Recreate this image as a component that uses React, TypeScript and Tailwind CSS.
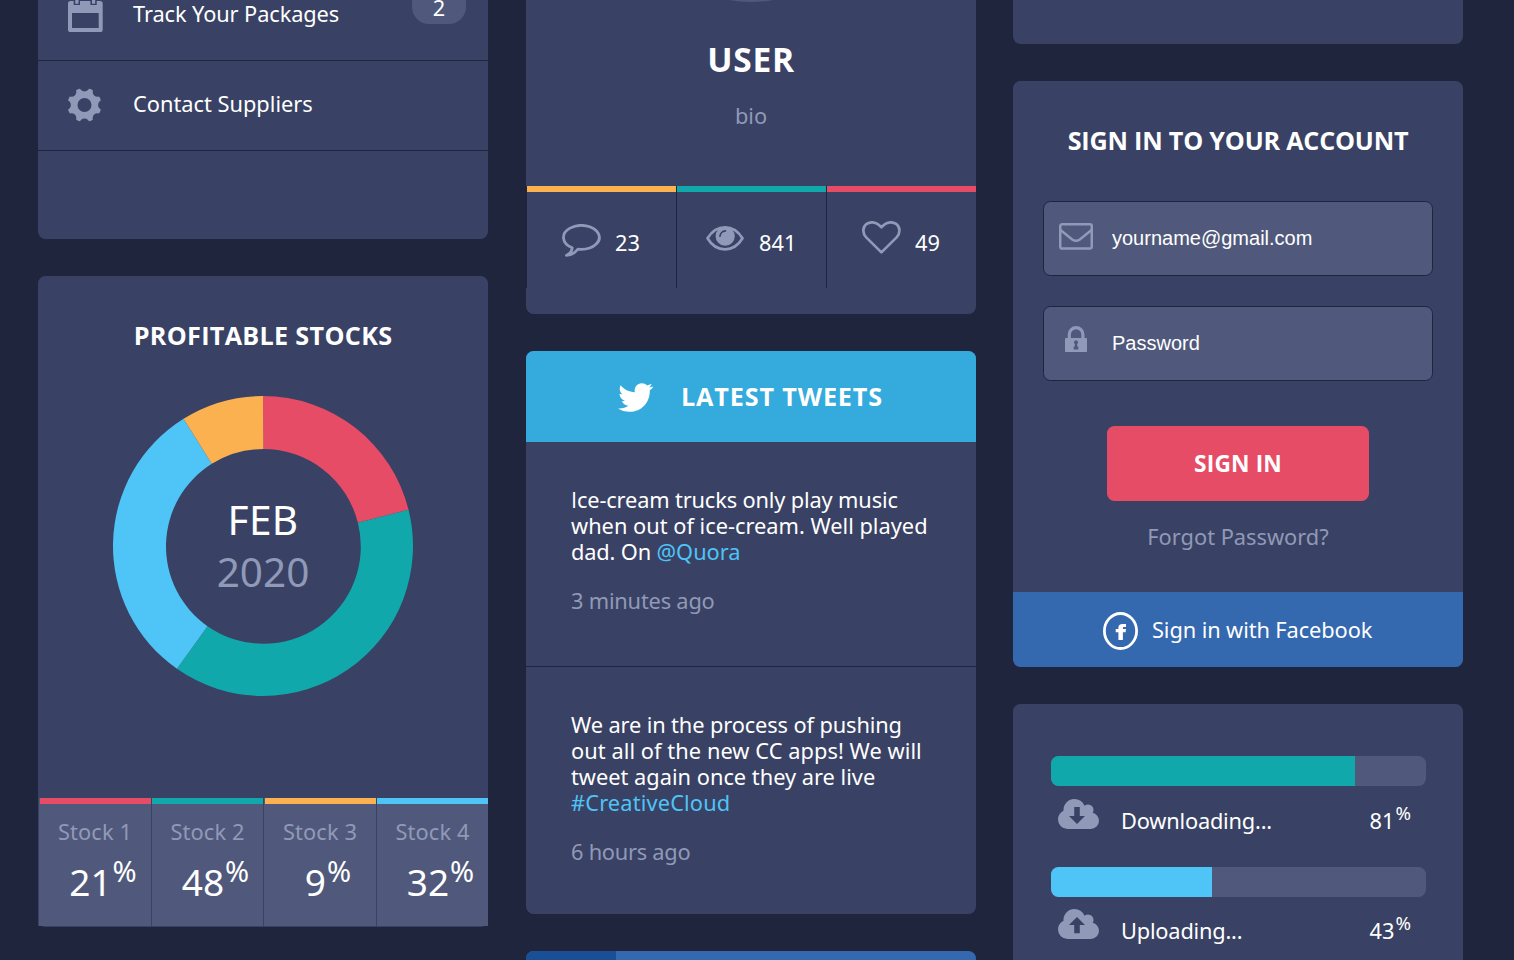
import type { ReactNode } from "react";

const ICON = "#9099b7";
const CARD = "#394264";

function CalendarIcon() {
  return (
    <svg width="35" height="37" viewBox="0 0 35 37" fill={ICON}>
      <path
        fillRule="evenodd"
        d="M2.6 6H5.7V9.9H12V6H22.4V9.9H28.7V6H32.1A2.6 2.6 0 0 1 34.7 8.6V34.4A2.6 2.6 0 0 1 32.1 37H2.6A2.6 2.6 0 0 1 0 34.4V8.6A2.6 2.6 0 0 1 2.6 6ZM4 18V33H30.7V18Z"
      />
      <path d="M7.3 0H10.5V8.7H7.3ZM24 0H27.2V8.7H24Z" />
    </svg>
  );
}

function GearIcon() {
  const notches = [0, 45, 90, 135, 180, 225, 270, 315];
  return (
    <svg width="34" height="34" viewBox="-16.5 -17 34 34">
      <circle r="17" fill={ICON} />
      {notches.map((a) => (
        <circle key={a} cy="-18.6" r="5" fill={CARD} transform={`rotate(${a})`} />
      ))}
      <circle r="7" fill={CARD} />
    </svg>
  );
}

function CommentIcon() {
  return (
    <svg width="39" height="34" viewBox="0 0 39 34" fill="none" stroke={ICON} strokeWidth="2.8" strokeLinejoin="round">
      <path d="M16 25.2C17 25.3 18 25.4 19.3 25.4A17.9 12 0 1 0 10.2 23.7C10.2 27 8 29.5 4.4 31.4C9 31 13 29 16 25.2Z" />
    </svg>
  );
}

function EyeIcon() {
  return (
    <svg width="38" height="25" viewBox="0 0 38 25" fill="none">
      <path
        d="M1.5 12.3C6 5 12 1.4 19 1.4S32 5 36.5 12.3C32 20 26 23.3 19 23.3S6 20 1.5 12.3Z"
        stroke={ICON}
        strokeWidth="2.7"
        strokeLinejoin="round"
      />
      <circle cx="19.2" cy="10.2" r="9.6" fill={ICON} />
      <path d="M14 10.2A5.8 5.8 0 0 1 19.4 4.8" stroke={CARD} strokeWidth="1.7" strokeLinecap="round" />
    </svg>
  );
}

function HeartIcon() {
  return (
    <svg width="39" height="34" viewBox="0 0 39 34" fill="none" stroke={ICON} strokeWidth="2.7" strokeLinejoin="round">
      <path d="M19.4 31.4L4.2 16.4C.2 12 .6 6.2 4.2 3.2C8.2 .2 13.8 1 17 4L19.4 6.4L21.8 4C25 1 30.6 .2 34.6 3.2C38.2 6.2 38.6 12 34.6 16.4Z" />
    </svg>
  );
}

function MailIcon() {
  return (
    <svg width="34" height="27" viewBox="0 0 34 27" fill="none" stroke={ICON} strokeWidth="2.5">
      <rect x="1.25" y="1.25" width="31.5" height="24.3" rx="1.8" />
      <path d="M1.5 7L13.2 16.4Q17 19.2 20.8 16.4L32.5 7" />
    </svg>
  );
}

function LockIcon() {
  return (
    <svg width="22" height="26" viewBox="0 0 22 26" fill={ICON}>
      <path d="M4.3 13V8.5A6.8 6.8 0 0 1 17.9 8.5V13" fill="none" stroke={ICON} strokeWidth="3.2" />
      <rect y="12" width="22" height="14" rx=".8" />
      <path d="M11 14.2A2.1 2.1 0 0 1 12.2 18V20.5H13.3V23.6H8.7V20.5H9.8V18A2.1 2.1 0 0 1 11 14.2Z" fill="#50597b" />
    </svg>
  );
}

function CloudIcon({ up = false }: { up?: boolean }) {
  return (
    <svg width="41" height="30" viewBox="0 128 1920 1408" preserveAspectRatio="none">
      <path
        fill={ICON}
        d="M1920 1152q0 159-112.5 271.5t-271.5 112.5h-1088q-185 0-316.5-131.5t-131.5-316.5q0-130 70-240t188-165q-2-30-2-43 0-212 150-362t362-150q156 0 285.5 87t188.5 231q71-62 166-62 106 0 181 75t75 181q0 76-41 138 130 31 213.5 135.5t83.5 238.5z"
      />
      <path
        fill={CARD}
        d={up ? "M890 500L1264 877H1020V1270H760V877H515Z" : "M760 503H1020V924H1264L890 1298L515 924H760Z"}
      />
    </svg>
  );
}

function FacebookIcon() {
  return (
    <svg width="35" height="38" viewBox="0 0 35 38" fill="none">
      <ellipse cx="17.5" cy="19" rx="16.1" ry="17.5" stroke="#fff" strokeWidth="2.8" />
      <path
        d="M15.4 28V20.3H12.7V17.1H15.4V15.8C15.4 13.2 16.8 12 19.4 12H23V15H21C20.2 15 19.9 15.4 19.9 16V17.1H23L22.6 20.3H19.9V28Z"
        fill="#fff"
      />
    </svg>
  );
}

function TwitterIcon() {
  return (
    <svg width="36" height="29" viewBox="0 0 36 29" fill="#fff">
      <path d="M2.6 2.3C6 6.5 11 9 16.8 9.2C16 4 19.5 .3 23.5 .3C26 .3 27.8 1.2 29 2.5L33.8 .8L31.5 4.4L35.4 3.4C34.4 5 33.2 6.2 31.8 7.2C32.2 19 24 28.8 11.5 28.8C7 28.8 3 27.5 0 25.5C4 25.8 7.5 24.8 10.3 22.8C7 22.5 5 20.8 4 18H7C4 16.8 1.6 14.5 1.5 10.8L4.6 11.5C1.5 9 1 5.5 2.6 2.3Z" />
    </svg>
  );
}

function polar(r: number, deg: number, c: number) {
  const t = (deg * Math.PI) / 180;
  return `${(c + r * Math.sin(t)).toFixed(2)} ${(c - r * Math.cos(t)).toFixed(2)}`;
}

function slice(from: number, to: number) {
  const large = to - from > 180 ? 1 : 0;
  return `M${polar(150, from, 150)}A150 150 0 ${large} 1 ${polar(150, to, 150)}L${polar(97.4, to, 150.4)}A97.4 97.4 0 ${large} 0 ${polar(97.4, from, 150.4)}Z`;
}

function Donut() {
  return (
    <svg width="300" height="300" viewBox="0 0 300 300">
      <path d={slice(0, 76)} fill="#e64c65" />
      <path d={slice(76, 215)} fill="#11a8ab" />
      <path d={slice(215, 328)} fill="#4fc4f6" />
      <path d={slice(328, 360)} fill="#fcb150" />
    </svg>
  );
}

function Stock({ label, value, bar, cell }: { label: string; value: string; bar: string; cell: string }) {
  return (
    <div className={`h-[128px] border-l border-[#394264] bg-[#50597b] ${cell}`}>
      <div className={`h-[6px] ${bar}`} />
      <p className="mt-[15px] text-center leading-[26px] tracking-[0.1px] text-[#9099b7]">{label}</p>
      <p className="mt-[17px] flex justify-center pl-[16px] text-[37px] leading-[40px] text-white">
        <span>{value}</span>
        <span className="-mt-[11px] ml-px text-[29px]">%</span>
      </p>
    </div>
  );
}

function Stat({ icon, value, bar, pad, num }: { icon: ReactNode; value: string; bar: string; pad: string; num: string }) {
  return (
    <div className="h-[102px] w-[150px] border-l border-[#1f253d]">
      <div className={`h-[6px] ${bar}`} />
      <div className={`flex items-start ${pad}`}>
        {icon}
        <span className={`mt-[38px] leading-[26px] text-white ${num}`}>{value}</span>
      </div>
    </div>
  );
}

function Progress({
  fill,
  icon,
  label,
  value,
  drop,
}: {
  fill: string;
  icon: ReactNode;
  label: string;
  value: string;
  drop: string;
}) {
  return (
    <div className="px-[38px]">
      <div className="h-[30px] w-[375px] overflow-hidden rounded-[7.5px] bg-[#50597b]">
        <div className={`h-full ${fill}`} />
      </div>
      <div className="flex items-start pl-[7px] pr-[14px]">
        {icon}
        <span className={`ml-[22px] leading-[26px] tracking-[-0.2px] text-white ${drop}`}>{label}</span>
        <span className={`ml-auto flex leading-[26px] text-white ${drop}`}>
          {value}
          <span className="-mt-[8px] ml-px text-[18.7px]">%</span>
        </span>
      </div>
    </div>
  );
}

const heading = "font-['Open_Sans'] font-bold text-[25.2px] leading-[30px] text-white";

export default function App() {
  return (
    <div className="flex h-[960px] w-[1514px] items-start overflow-hidden bg-[#1f253d] pl-[38px] font-['Noto_Sans',sans-serif] text-[21.8px] [&_svg]:shrink-0">
      <div className="w-[450px] shrink-0">
        <nav className="h-[239px] overflow-hidden rounded-b-[7.5px] bg-[#394264]">
          <div className="-mt-[29px] flex h-[90px] items-start border-b border-[#1f253d] pl-[30px] pr-[22px]">
            <div className="mt-[24px] flex w-[65px]">
              <CalendarIcon />
            </div>
            <span className="mt-[30px] leading-[26px] tracking-[-0.1px] text-white">Track Your Packages</span>
            <span className="ml-auto mt-[15px] h-[38px] w-[54px] rounded-[17px] bg-[#50597b] pt-[9px] text-center leading-[26px] text-white">
              2
            </span>
          </div>
          <div className="flex h-[90px] items-start border-b border-[#1f253d] pl-[30px]">
            <div className="mt-[27px] flex w-[65px]">
              <GearIcon />
            </div>
            <span className="mt-[30px] leading-[26px] text-white">Contact Suppliers</span>
          </div>
        </nav>

        <section className="mt-[37px] h-[651px] rounded-[7.5px] bg-[#394264] pt-[44px]">
          <h2 className={`text-center tracking-[0.3px] ${heading}`}>PROFITABLE STOCKS</h2>
          <div className="relative mt-[46px] flex h-[300px] justify-center">
            <Donut />
            <div className="absolute inset-x-0 top-[98px] text-center text-[40.5px] leading-[52px]">
              <p className="tracking-[0.4px] text-white">FEB</p>
              <p className="text-[#9099b7]">2020</p>
            </div>
          </div>
          <div className="mt-[102px] flex">
            <Stock label="Stock 1" value="21" bar="ml-px bg-[#e64c65]" cell="w-[113px]" />
            <Stock label="Stock 2" value="48" bar="bg-[#11a8ab]" cell="w-[112px]" />
            <Stock label="Stock 3" value="9" bar="ml-px bg-[#fcb150]" cell="w-[113px]" />
            <Stock label="Stock 4" value="32" bar="bg-[#4fc4f6]" cell="w-[112px]" />
          </div>
        </section>
      </div>

      <div className="ml-[38px] w-[450px] shrink-0">
        <section className="h-[314px] rounded-b-[7.5px] bg-[#394264]">
          <div className="flex h-[2px] items-end justify-center overflow-hidden">
            <div className="h-[250px] w-[250px] shrink-0 rounded-full bg-[#50597b]" />
          </div>
          <h1 className="mt-[38px] text-center font-['Open_Sans'] text-[33.5px] font-bold leading-[38px] tracking-[0.7px] text-white">
            USER
          </h1>
          <p className="mt-[25px] text-center leading-[26px] text-[#9099b7]">bio</p>
          <div className="mt-[57px] flex">
            <Stat
              icon={<div className="mt-[32px] flex"><CommentIcon /></div>}
              value="23"
              bar="bg-[#fcb150]"
              pad="pl-[35px]"
              num="ml-[14px]"
            />
            <Stat
              icon={<div className="mt-[34px] flex"><EyeIcon /></div>}
              value="841"
              bar="bg-[#11a8ab]"
              pad="pl-[29px]"
              num="ml-[15px]"
            />
            <Stat
              icon={<div className="mt-[29px] flex"><HeartIcon /></div>}
              value="49"
              bar="bg-[#e64c65]"
              pad="pl-[35px]"
              num="ml-[14px]"
            />
          </div>
        </section>

        <section className="mt-[37px] h-[563px] overflow-hidden rounded-[7.5px] bg-[#394264]">
          <header className="flex h-[91px] items-start bg-[#35aadc] pl-[92px]">
            <div className="mt-[32px] flex">
              <TwitterIcon />
            </div>
            <h2 className={`ml-[27px] mt-[30px] tracking-[0.85px] ${heading}`}>LATEST TWEETS</h2>
          </header>
          <article className="h-[225px] border-b border-[#1f253d] px-[45px] pt-[45px]">
            <p className="whitespace-nowrap leading-[26px] text-white">
              <span className="tracking-[-0.15px]">
                <span className="font-['Open_Sans']">I</span>ce-cream trucks only play music
              </span>
              <br />
              when out of ice-cream. Well played
              <br />
              <span className="tracking-[-0.15px]">dad. On </span>
              <a className="text-[#4fc4f6]">@Quora</a>
            </p>
            <p className="mt-[23px] leading-[26px] tracking-[-0.2px] text-[#9099b7]">3 minutes ago</p>
          </article>
          <article className="px-[45px] pt-[45px]">
            <p className="whitespace-nowrap leading-[26px] text-white">
              <span className="tracking-[-0.12px]">We are in the process of pushing</span>
              <br />
              <span className="tracking-[0.06px]">out all of the new CC apps! We will</span>
              <br />
              tweet again once they are live
              <br />
              <a className="tracking-[0.15px] text-[#4fc4f6]">#CreativeCloud</a>
            </p>
            <p className="mt-[23px] leading-[26px] tracking-[-0.25px] text-[#9099b7]">6 hours ago</p>
          </article>
        </section>

        <section className="mt-[37px] flex h-[75px] overflow-hidden rounded-[7.5px] bg-[#3468af]">
          <div className="w-[90px] bg-[#1a4e95]" />
        </section>
      </div>

      <div className="ml-[37px] w-[450px] shrink-0">
        <div className="h-[44px] rounded-b-[7.5px] bg-[#394264]" />

        <section className="mt-[37px] flex h-[586px] flex-col overflow-hidden rounded-[7.5px] bg-[#394264] pt-[44px]">
          <h2 className={`text-center tracking-[-0.22px] ${heading}`}>SIGN IN TO YOUR ACCOUNT</h2>
          <div className="mx-[30px] mt-[46px] flex h-[75px] items-start rounded-[7.5px] border border-[#1f253d] bg-[#50597b] pl-[15px]">
            <div className="mt-[21px] flex w-[53px]">
              <MailIcon />
            </div>
            <input
              className="h-[73px] w-[300px] bg-transparent font-['Liberation_Sans'] text-[20px] text-white outline-none placeholder:text-white"
              placeholder="yourname@gmail.com"
            />
          </div>
          <div className="mx-[30px] mt-[30px] flex h-[75px] items-start rounded-[7.5px] border border-[#1f253d] bg-[#50597b] pl-[21px]">
            <div className="mt-[19px] flex w-[47px]">
              <LockIcon />
            </div>
            <input
              className="h-[73px] w-[300px] bg-transparent font-['Liberation_Sans'] text-[20px] text-white outline-none placeholder:text-white"
              placeholder="Password"
            />
          </div>
          <button className="mx-auto mt-[45px] h-[75px] w-[262px] rounded-[7.5px] bg-[#e64c65] pt-px font-['Open_Sans'] text-[22.7px] font-bold leading-[26px] tracking-[0.15px] text-white">
            SIGN IN
          </button>
          <p className="mt-[23px] text-center leading-[26px] text-[#9099b7]">Forgot Password?</p>
          <div className="mt-[42px] flex h-[75px] items-start bg-[#3468af] pl-[90px]">
            <div className="mt-[20px] flex">
              <FacebookIcon />
            </div>
            <span className="ml-[14px] mt-[25px] leading-[26px] tracking-[-0.1px] text-white">Sign in with Facebook</span>
          </div>
        </section>

        <section className="mt-[37px] h-[300px] rounded-t-[7.5px] bg-[#394264] pt-[52px]">
          <div className="h-[111px]">
            <Progress
              fill="w-[304px] bg-[#11a8ab]"
              icon={<div className="mt-[13px] flex"><CloudIcon /></div>}
              label="Downloading..."
              value="81"
              drop="mt-[22px]"
            />
          </div>
          <Progress
            fill="w-[161px] bg-[#4fc4f6]"
            icon={<div className="mt-[12px] flex"><CloudIcon up /></div>}
            label="Uploading..."
            value="43"
            drop="mt-[21px]"
          />
        </section>
      </div>
    </div>
  );
}
